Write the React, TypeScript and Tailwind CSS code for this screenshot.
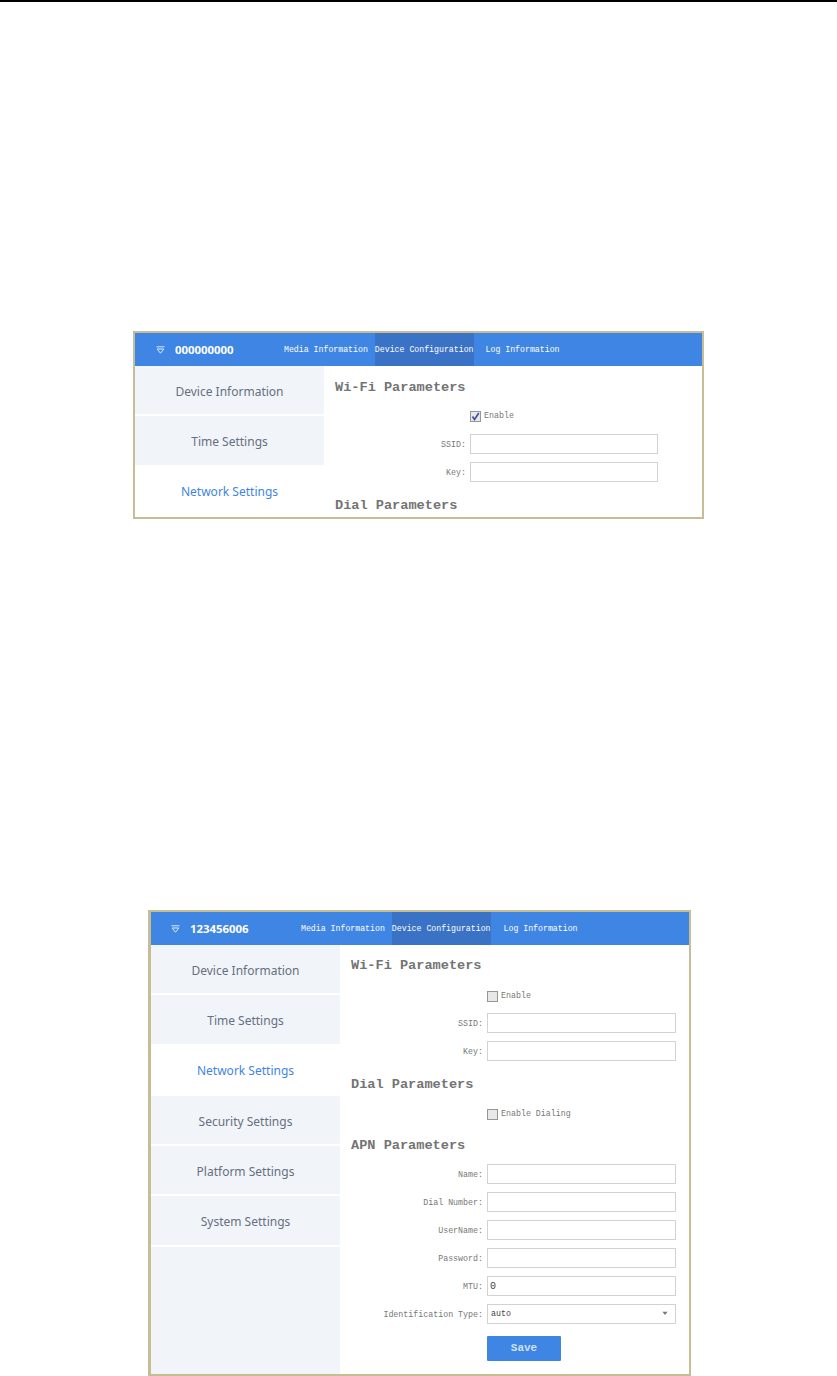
const mono = "font-['Liberation_Mono',monospace]";

function Caret() {
  return (
    <svg width="6" height="5" viewBox="0 0 6 5" className="absolute right-[7px] top-[6px]">
      <path d="M0.5 0.8h5L3 4z" fill="#777" />
    </svg>
  );
}

function Wifi() {
  return (
    <svg width="9" height="8" viewBox="0 0 9 8" fill="none" className="shrink-0">
      <path d="M0.5 0.8h8" stroke="#dbe8fb" strokeWidth="1" />
      <path d="M1.2 3h6.6L4.5 7.2z" stroke="#dbe8fb" strokeWidth="1" />
    </svg>
  );
}

function Check({ checked = false }: { checked?: boolean }) {
  return (
    <div className="relative h-[11px] w-[11px] shrink-0 border border-[#969696] bg-[#e8e8e8]">
      {checked && (
        <svg width="9" height="9" viewBox="0 0 9 9" fill="none" className="absolute left-0 top-0">
          <path d="M1.5 4.5 3.5 7.5 7.8 1" stroke="#3b4fa8" strokeWidth="1.6" />
        </svg>
      )}
    </div>
  );
}

function Heading({ children, className = "" }: { children: string; className?: string }) {
  return (
    <div className={`${mono} pl-[11px] text-[13.6px] font-bold leading-[16px] text-[#747474] ${className}`}>
      {children}
    </div>
  );
}

function Label({ children, width }: { children?: string; width: string }) {
  return (
    <div className={`${mono} ${width} shrink-0 pr-[4px] text-right text-[8.3px] leading-[21px] text-[#777]`}>
      {children}
    </div>
  );
}

function Field({
  label,
  value = "",
  labelWidth = "w-[147px]",
  inputWidth = "w-[189px]",
}: {
  label: string;
  value?: string;
  labelWidth?: string;
  inputWidth?: string;
}) {
  return (
    <div className="flex h-[20px]">
      <Label width={labelWidth}>{label}</Label>
      <input
        readOnly
        value={value}
        className={`h-[20px] ${inputWidth} border border-[#d2d2d2] bg-white px-[2px] text-[10px] text-[#444] outline-none ${mono}`}
      />
    </div>
  );
}

function CheckRow({ label, checked, indent = "pl-[147px]" }: { label: string; checked?: boolean; indent?: string }) {
  return (
    <div className={`flex h-[12px] items-center ${indent}`}>
      <Check checked={checked} />
      <span className={`${mono} ml-[3px] text-[8.3px] text-[#777]`}>{label}</span>
    </div>
  );
}

const sidebarItems = [
  "Device Information",
  "Time Settings",
  "Network Settings",
  "Security Settings",
  "Platform Settings",
  "System Settings",
];

function Panel({
  title,
  height,
  count,
  children,
  className = "",
  brand = "w-[149px] pl-[21px]",
  logGap = "ml-[12px]",
}: {
  title: string;
  height: string;
  count: number;
  children: React.ReactNode;
  className?: string;
  brand?: string;
  logGap?: string;
}) {
  return (
    <div className={`flex flex-col overflow-hidden border-2 border-[#c6bd95] bg-white ${height} ${className}`}>
      <div className="flex h-[33px] shrink-0 items-stretch bg-[#3f85e4] text-white">
        <div className={`flex shrink-0 items-center ${brand}`}>
          <Wifi />
          <span className="ml-[10px] font-['Noto_Sans',sans-serif] text-[11.4px] font-bold">{title}</span>
        </div>
        <div className={`${mono} flex items-stretch text-[8.22px]`}>
          <span className="flex items-center pt-[1px]">Media Information</span>
          <span className="ml-[7px] flex items-center bg-[#3a72c6] pt-[1px]">Device Configuration</span>
          <span className={`${logGap} flex items-center pt-[1px]`}>Log Information</span>
        </div>
      </div>
      <div className="flex min-h-0 flex-1">
        <div className="w-[189px] shrink-0 bg-[#f1f4f9]">
          {sidebarItems.slice(0, count).map((item, i) => (
            <div
              key={item}
              className={`flex h-[50.3px] items-center justify-center border-b-2 pt-[3px] font-['Noto_Sans',sans-serif] text-[12px] ${
                i === 2 ? "border-white bg-white text-[#3f85e4]" : "border-white text-[#667080]"
              }`}
            >
              {item}
            </div>
          ))}
        </div>
        <div className="min-w-0 flex-1">{children}</div>
      </div>
    </div>
  );
}

export default function App() {
  return (
    <div className="min-h-[1376px] w-[837px] overflow-hidden bg-white">
      <div className="h-[2px] w-full bg-black" />

      <Panel title="000000000" count={3} height="h-[188px]" className="ml-[133px] mt-[329px] w-[571px]">
        <Heading className="mt-[14px]">Wi-Fi Parameters</Heading>
        <div className="mt-[14px]">
          <CheckRow label="Enable" checked indent="pl-[146px]" />
        </div>
        <div className="mt-[12px] flex flex-col gap-[8px]">
          <Field label="SSID:" labelWidth="w-[146px]" inputWidth="w-[188px]" />
          <Field label="Key:" labelWidth="w-[146px]" inputWidth="w-[188px]" />
        </div>
        <Heading className="mt-[16px]">Dial Parameters</Heading>
      </Panel>

      <Panel
        title="123456006"
        count={6}
        height="h-[466px]"
        className="ml-[148px] mt-[391px] w-[543px] border-l-[3px]"
        brand="w-[150px] pl-[20px]"
        logGap="ml-[13px]"
      >
        <Heading className="mt-[13px]">Wi-Fi Parameters</Heading>
        <div className="mt-[16px]">
          <CheckRow label="Enable" />
        </div>
        <div className="mt-[11px] flex flex-col gap-[8px]">
          <Field label="SSID:" />
          <Field label="Key:" />
        </div>
        <Heading className="mt-[16px]">Dial Parameters</Heading>
        <div className="mt-[15px]">
          <CheckRow label="Enable Dialing" />
        </div>
        <Heading className="mt-[18px]">APN Parameters</Heading>
        <div className="mt-[10px] flex flex-col gap-[8px]">
          <Field label="Name:" />
          <Field label="Dial Number:" />
          <Field label="UserName:" />
          <Field label="Password:" />
          <Field label="MTU:" value="0" />
          <div className="flex h-[20px]">
            <Label width="w-[147px]">Identification Type:</Label>
            <div className={`${mono} relative flex h-[20px] w-[189px] items-center border border-[#d2d2d2] bg-white pl-[3px] pt-[1px] text-[8.3px] text-[#444]`}>
              auto
              <Caret />
            </div>
          </div>
        </div>
        <div className="mt-[9px] pl-[147px]">
          <button className={`${mono} h-[25px] w-[74px] rounded-[1px] bg-[#3f85e4] text-[11px] font-bold text-[#cfe0f7]`}>
            Save
          </button>
        </div>
      </Panel>
    </div>
  );
}
